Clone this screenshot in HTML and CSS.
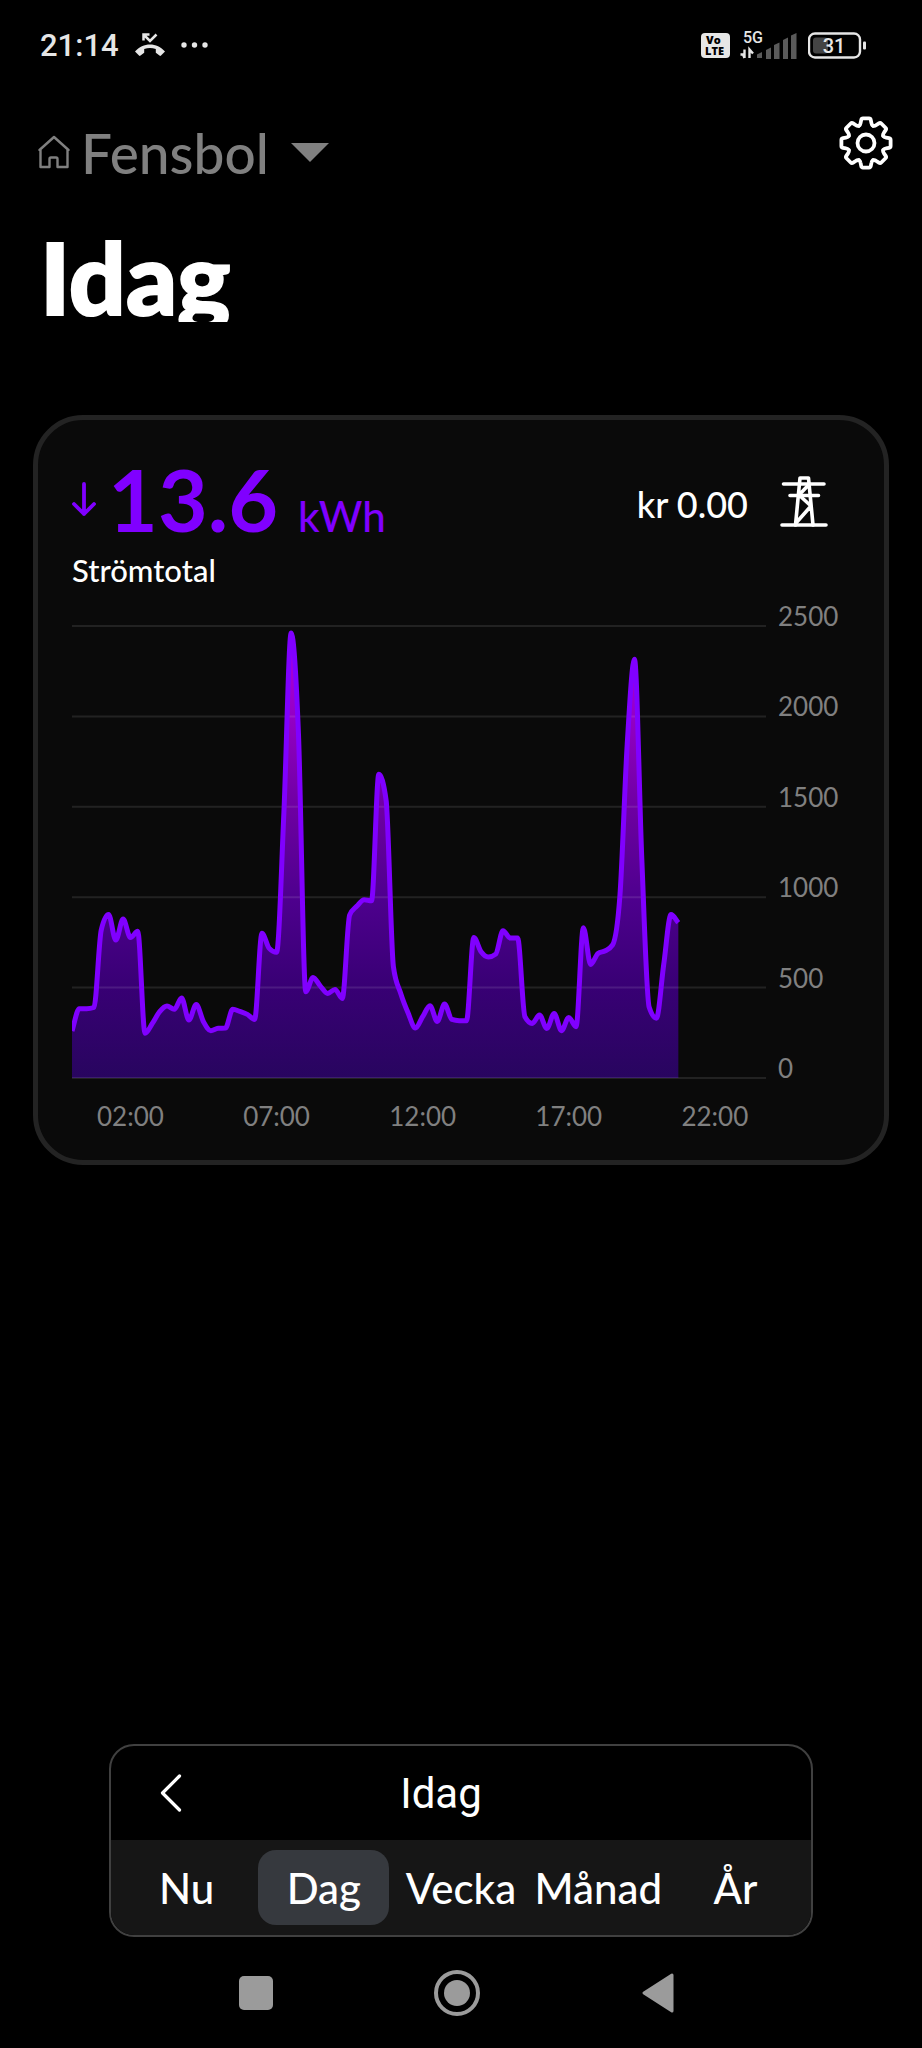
FILE: index.html
```
<!DOCTYPE html>
<html lang="sv">
<head>
  <meta charset="UTF-8" />
  <meta name="viewport" content="width=device-width, initial-scale=1.0" />
  <title>Idag</title>
  <link rel="stylesheet" href="styles.css">
</head>
<body>
  <div class="status-bar">
    <div class="status-left">
      <span class="clock">21:14</span>
      <svg width="32" height="24" viewBox="0 0 32 24" fill="#e6e6e6">
        <path d="M1 18.500C5 14 10.500 11.500 16 11.500S27 14 31 18.500L27 22.500C26.500 23 26 23 25.500 22.600L21.800 19.800V16C18 14.600 14 14.600 10.200 16V19.800L6.500 22.600C6 23 5.500 23 5 22.500Z" />
        <path d="M9.500 7.500V1.500H15.500M10 2L16 8L22.500 1.500" fill="none" stroke="#e6e6e6" stroke-width="2.500" />
      </svg>
      <svg width="28" height="6" viewBox="0 0 28 6" fill="#e6e6e6">
        <circle cx="3" cy="3" r="2.700" /><circle cx="13.500" cy="3" r="2.700" /><circle cx="24" cy="3" r="2.700" />
      </svg>
    </div>
    <div class="status-right">
      <svg width="29" height="36" viewBox="0 -4 29 36">
        <rect y="2" width="29" height="25" rx="4" fill="#e6e6e6" />
        <text x="5" y="13" class="volte">Vo</text>
        <text x="4" y="24" class="volte">LTE</text>
      </svg>
      <svg width="58" height="36" viewBox="0 -4 58 36">
        <text x="3" y="12" class="network">5G</text>
        <path d="M4.500 27V18.500M0.500 23.500H3L4.500 27M9.500 27V18.500L13 22.500" fill="none" stroke="#e6e6e6" stroke-width="2.400" />
        <g fill="#5a5a5a">
          <path d="M17 27V23.500L22 21V27Z" />
          <path d="M26 28V19L31 16.500V28Z" />
          <path d="M34 28V14L39.500 11.500V28Z" />
          <path d="M43 28V9L48 6.500V28Z" />
          <path d="M51 28V4.500L56.500 2V28Z" />
        </g>
      </svg>
      <svg width="59" height="36" viewBox="0 -4 59 36">
        <rect x="1" y="2.500" width="51" height="24" rx="6" fill="none" stroke="#e6e6e6" stroke-width="2.400" />
        <rect x="5" y="6.500" width="15" height="16" rx="3" fill="#444" />
        <rect x="55" y="10.500" width="3" height="8" rx="1" fill="#e6e6e6" />
        <text x="26" y="22" text-anchor="middle" class="battery">31</text>
      </svg>
    </div>
  </div>

  <header class="header">
    <div class="home-picker">
      <svg class="home-icon" width="32" height="34" viewBox="0 0 32 34" fill="none" stroke="#808080" stroke-width="2.400" stroke-linejoin="round" stroke-linecap="round">
        <path d="M1.500 15L16 2L30.500 15M2.500 14.500V32H11.500V24Q11.500 22.500 13 22.500H18Q19.500 22.500 19.500 24V32H29.500V14.500" />
      </svg>
      <select class="home-select" aria-label="Hem">
        <option>Fensbol</option>
      </select>
      <svg class="home-arrow" width="38" height="20" viewBox="0 0 38 20" fill="#808080"><path d="M0 0H38L19 19Z" /></svg>
    </div>
    <button class="settings" aria-label="Inställningar">
      <svg width="54" height="54" viewBox="-27 -27 54 54" fill="none" stroke="#fff" stroke-width="3.800" stroke-linecap="round" stroke-linejoin="round">
        <defs>
          <path id="tooth" d="M-7.100 -17.200C-6 -17.800 -5.600 -18.600 -5.400 -20L-4.800 -23Q-4.500 -24.600 -3 -24.600H3Q4.500 -24.600 4.800 -23L5.400 -20C5.600 -18.600 6 -17.800 7.100 -17.200" />
        </defs>
        <circle r="8.500" />
        <use href="#tooth" />
        <use href="#tooth" transform="rotate(45)" />
        <use href="#tooth" transform="rotate(90)" />
        <use href="#tooth" transform="rotate(135)" />
        <use href="#tooth" transform="rotate(180)" />
        <use href="#tooth" transform="rotate(225)" />
        <use href="#tooth" transform="rotate(270)" />
        <use href="#tooth" transform="rotate(315)" />
      </svg>
    </button>
  </header>

  <h1>Idag</h1>

  <main class="card">
    <div class="summary">
      <svg class="down-arrow" width="24" height="35" viewBox="0 0 24 35" fill="none" stroke="#8000ff" stroke-width="3.800" stroke-linecap="round" stroke-linejoin="round">
        <path d="M12 2V32M2 22L12 32L22 22" />
      </svg>
      <span class="total">13.6</span>
      <span class="unit">kWh</span>
      <span class="cost">kr 0.00</span>
      <svg class="pylon" width="48" height="52" viewBox="0 0 48 52" fill="none" stroke="#fff" stroke-width="3.600" stroke-linecap="round" stroke-linejoin="round">
        <path d="M2 49H46M3.500 8H44M10 19.500H38.500" />
        <path d="M15.500 49L20 2H28.500L33 49M28.500 9L19 19L31 30L16 47" />
      </svg>
    </div>
    <p class="label">Strömtotal</p>

    <svg class="chart" viewBox="0 0 778 540" role="img" aria-label="Strömtotal">
      <defs>
        <linearGradient id="fill" gradientUnits="userSpaceOnUse" x1="0" y1="26" x2="0" y2="478">
          <stop offset="0" stop-color="#b400e6" />
          <stop offset="0.200" stop-color="#9400c4" />
          <stop offset="0.400" stop-color="#6e00a2" />
          <stop offset="0.600" stop-color="#4e008e" />
          <stop offset="0.800" stop-color="#380074" />
          <stop offset="1" stop-color="#28055f" />
        </linearGradient>
      </defs>
      <path id="area" fill="url(#fill)" />
      <g id="grid"></g>
      <path id="line" />
      <g id="axis"></g>
    </svg>
  </main>

  <section class="period">
    <div class="period-head">
      <button class="back" aria-label="Föregående">
        <svg width="22" height="38" viewBox="0 0 22 38" fill="none" stroke="#fff" stroke-width="3.200" stroke-linecap="round" stroke-linejoin="round"><path d="M19.500 2L2.500 19L19.500 36" /></svg>
      </button>
      <span class="period-title">Idag</span>
    </div>
    <div class="tabs">
      <button>Nu</button>
      <button class="active">Dag</button>
      <button>Vecka</button>
      <button>Månad</button>
      <button>År</button>
    </div>
  </section>

  <nav class="system-nav">
    <button aria-label="Senaste"><svg width="34" height="34" viewBox="0 0 34 34" fill="#9b9b9b"><rect width="34" height="34" rx="5" /></svg></button>
    <button aria-label="Hem"><svg width="48" height="48" viewBox="0 0 48 48"><circle cx="24" cy="24" r="21" fill="none" stroke="#9b9b9b" stroke-width="4" /><circle cx="24" cy="24" r="13" fill="#9b9b9b" /></svg></button>
    <button aria-label="Tillbaka"><svg width="32" height="40" viewBox="0 0 32 40"><path d="M2 20L30 2V38Z" fill="#9b9b9b" stroke="#9b9b9b" stroke-width="3" stroke-linejoin="round" /></svg></button>
  </nav>

  <script src="chart.js"></script>
</body>
</html>
```
FILE: styles.css
```
body {
  font-family: Lato, sans-serif;
  font-weight: 500;
  background: #000;
  color: #fff;
  margin: 0;
  min-height: 100vh;
  display: flex;
  flex-direction: column;
}
button {
  background: none;
  border: none;
  padding: 0;
  color: inherit;
  font-family: inherit;
  cursor: pointer;
}
svg {
  display: block;
  flex-shrink: 0;
}

/* status bar */
.status-bar {
  display: flex;
  justify-content: space-between;
  align-items: center;
  height: 90px;
  padding: 0 55px 0 40px;
  font-family: Roboto, sans-serif;
  color: #e6e6e6;
}
.status-left {
  display: flex;
  align-items: center;
  gap: 15px;
}
.status-right {
  display: flex;
  align-items: center;
  gap: 10px;
}
.clock {
  font-size: 31px;
  font-weight: 500;
}
.volte {
  font: 900 11px "Open Sans", sans-serif;
  fill: #000;
}
.network {
  font: 500 16px Roboto, sans-serif;
  fill: #e6e6e6;
}
.battery {
  font: 500 20px Roboto, sans-serif;
  fill: #e6e6e6;
}

/* header */
.header {
  display: flex;
  justify-content: space-between;
  align-items: flex-start;
  padding: 26px 29px 0 38px;
}
.home-picker {
  display: flex;
  align-items: center;
  padding-top: 5px;
}
.home-select {
  appearance: none;
  background: none;
  border: none;
  margin: 0;
  padding: 0 22px 0 11px;
  color: #808080;
  font-family: inherit;
  font-weight: 500;
  font-size: 55px;
  line-height: 64px;
}
.home-icon {
  margin-bottom: 2px;
}
h1 {
  margin: 38px 40px 0;
  height: 99px;
  overflow: hidden;
  font-size: 100px;
  line-height: 106px;
  font-weight: 900;
  -webkit-text-stroke: 2px #fff;
}

/* card */
.card {
  margin: 93px 33px 0;
  padding: 36px 34px 20px;
  background: #0a0a0a;
  border: 5px solid #232323;
  border-radius: 50px;
}
.summary {
  display: flex;
  align-items: baseline;
  height: 86px;
  line-height: 86px;
  color: #8000ff;
}
.down-arrow {
  align-self: center;
}
.total {
  margin-left: 12px;
  font-size: 86px;
  font-weight: 700;
}
.unit {
  margin-left: 20px;
  font-size: 42px;
}
.cost {
  margin: 10px 0 0 auto;
  align-self: center;
  color: #fff;
  font-size: 36px;
}
.pylon {
  align-self: center;
  margin: 6px 22px 0 32px;
}
.label {
  margin: 8px 0 10px;
  font-size: 31px;
  line-height: 40px;
}
.chart {
  width: 100%;
}
.chart text {
  fill: #808080;
  font-size: 26px;
  font-weight: 400;
}
#grid line {
  stroke: rgba(255, 255, 255, 0.1);
  stroke-width: 2;
}
#line {
  fill: none;
  stroke: #8000ff;
  stroke-width: 5;
  stroke-linejoin: round;
}

/* period picker */
.period {
  margin: auto 109px 0;
  border: 2px solid #404040;
  border-radius: 25px;
  overflow: hidden;
}
.period-head {
  display: grid;
  grid-template-columns: 120px 1fr 160px;
  align-items: center;
  height: 94px;
}
.back {
  display: flex;
  justify-content: center;
}
.period-title {
  text-align: center;
  font-family: Roboto, sans-serif;
  font-size: 42px;
  font-weight: 400;
}
.tabs {
  display: grid;
  grid-template-columns: repeat(5, 1fr);
  gap: 6px;
  padding: 10px;
  background: #161616;
}
.tabs button {
  height: 75px;
  border-radius: 18px;
  font-size: 42px;
  font-weight: 500;
}
.tabs .active {
  background: #36393e;
}

/* system navigation */
.system-nav {
  display: flex;
  justify-content: center;
  align-items: center;
  gap: 141px;
  height: 111px;
  padding-right: 8px;
}
.system-nav button {
  width: 60px;
  display: flex;
  justify-content: center;
}
```
FILE: chart.js
```
// one value per 15 minutes, in watts
const values = [
  260, 383, 383, 390, 818, 905, 763, 879, 777, 811, 247, 302,
  367, 398, 380, 442, 321, 407, 311, 262, 275, 276, 380, 368,
  352, 324, 800, 717, 695, 1463, 2461, 1905, 477, 556, 508, 468,
  490, 440, 901, 951, 986, 980, 1680, 1536, 615, 468, 361, 276,
  339, 400, 313, 409, 324, 317, 317, 777, 698, 669, 685, 814,
  774, 774, 339, 302, 348, 274, 357, 262, 335, 284, 831, 628,
  689, 704, 736, 1006, 1845, 2316, 1211, 393, 331, 628, 904, 859
];

const plotWidth = 694;
const top0 = 26;
const bottom = 478;
const step = plotWidth / 95;
const x = i => i * step;
const y = v => bottom - v * (bottom - top0) / 2500;

const pts = values.map((v, i) => [x(i), y(v)]);

// monotone cubic interpolation, so the curve never overshoots a value
function tangents(p) {
  const slopes = p.slice(1).map((q, i) => (q[1] - p[i][1]) / (q[0] - p[i][0]));
  return p.map((_, i) => {
    if (i === 0) return slopes[0];
    if (i === p.length - 1) return slopes[i - 1];
    const a = slopes[i - 1];
    const b = slopes[i];
    if (a * b <= 0) return 0;
    return Math.sign(a) * Math.min(Math.abs(a) * 2, Math.abs(b) * 2, Math.abs(a + b) / 2);
  });
}

const m = tangents(pts);
let d = `M${pts[0]}`;
for (let i = 1; i < pts.length; i++) {
  const [x0, y0] = pts[i - 1];
  const [x1, y1] = pts[i];
  const h = (x1 - x0) / 3;
  d += `C${x0 + h},${y0 + m[i - 1] * h} ${x1 - h},${y1 - m[i] * h} ${x1},${y1}`;
}
document.getElementById('line').setAttribute('d', d);
document.getElementById('area').setAttribute('d', `${d}V${bottom}H0Z`);

let grid = '';
let axis = '';
for (let v = 0; v <= 2500; v += 500) {
  grid += `<line x1="0" x2="${plotWidth}" y1="${y(v)}" y2="${y(v)}" />`;
  axis += `<text x="706" y="${y(v)}">${v}</text>`;
}
for (let hour = 2; hour < 24; hour += 5) {
  const label = String(hour).padStart(2, '0') + ':00';
  axis += `<text x="${x(hour * 4)}" y="526" text-anchor="middle">${label}</text>`;
}
document.getElementById('grid').innerHTML = grid;
document.getElementById('axis').innerHTML = axis;
```
